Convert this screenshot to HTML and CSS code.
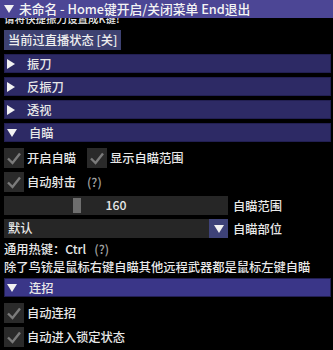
FILE: index.html
```html
<!DOCTYPE html>
<html>
<head>
<meta charset="utf-8">
<link rel="stylesheet" href="styles.css">
</head>
<body>
<div class="window">
  <div class="titlebar"><span class="tri-down"></span><span>未命名 - Home键开启/关闭菜单 End退出</span></div>
  <div class="body">
    <div class="content">
      <div class="text first">请将快捷振刀设置成K键!</div>
      <div class="row btn-row"><div class="button">当前过直播状态 [关]</div></div>
      <div class="header"><span class="tri-right"></span><span>振刀</span></div>
      <div class="header"><span class="tri-right"></span><span>反振刀</span></div>
      <div class="header"><span class="tri-right"></span><span>透视</span></div>
      <div class="header"><span class="tri-down"></span><span>自瞄</span></div>
      <div class="row check-row first-check">
        <label class="check"><span class="box"><svg viewBox="0 0 20 20"><polyline points="4,10.5 8.5,15 16,5.5"/></svg></span><span>开启自瞄</span></label>
        <label class="check"><span class="box"><svg viewBox="0 0 20 20"><polyline points="4,10.5 8.5,15 16,5.5"/></svg></span><span>显示自瞄范围</span></label>
      </div>
      <div class="row check-row">
        <label class="check"><span class="box"><svg viewBox="0 0 20 20"><polyline points="4,10.5 8.5,15 16,5.5"/></svg></span><span>自动射击</span></label>
        <span class="help">(?)</span>
      </div>
      <div class="row">
        <div class="slider"><span class="grab" style="left: 69px"></span><span class="value">160</span></div>
        <span class="label">自瞄范围</span>
      </div>
      <div class="row">
        <div class="combo"><span class="combo-text">默认</span><span class="combo-btn"><span class="tri-down"></span></span></div>
        <span class="label">自瞄部位</span>
      </div>
      <div class="text">通用热键：Ctrl<span class="help hotkey-help">(?)</span></div>
      <div class="text">除了鸟铳是鼠标右键自瞄其他远程武器都是鼠标左键自瞄</div>
      <div class="header active"><span class="tri-down"></span><span>连招</span></div>
      <div class="row check-row first-check">
        <label class="check"><span class="box"><svg viewBox="0 0 20 20"><polyline points="4,10.5 8.5,15 16,5.5"/></svg></span><span>自动连招</span></label>
      </div>
      <div class="row check-row">
        <label class="check"><span class="box"><svg viewBox="0 0 20 20"><polyline points="4,10.5 8.5,15 16,5.5"/></svg></span><span>自动进入锁定状态</span></label>
      </div>
    </div>
  </div>
</div>
</body>
</html>
```
FILE: styles.css
```css
html, body {
  margin: 0;
  padding: 0;
  background: #000;
}
body {
  width: 333px;
  height: 350px;
  overflow: hidden;
  font-family: "Noto Sans CJK SC", "Noto Sans", sans-serif;
  font-size: 12.25px;
  font-weight: 500;
  color: #e8e8e8;
}
.window {
  width: 333px;
  height: 350px;
  display: flex;
  flex-direction: column;
  background: #000;
}
.titlebar {
  height: 18px;
  flex: none;
  background: #4c4695;
  display: flex;
  align-items: center;
  gap: 5px;
  padding-left: 4px;
  line-height: 18px;
  font-size: 12.75px;
  color: #f4f4f4;
}
.body {
  flex: 1;
  overflow: hidden;
}
.content {
  display: flex;
  flex-direction: column;
  gap: 4px;
  padding-left: 4px;
  padding-right: 2px;
  margin-top: -6px;
}
.text {
  height: 14px;
  line-height: 14px;
  white-space: nowrap;
}
.text.first {
  font-size: 10.5px;
}
.row {
  display: flex;
  align-items: center;
  height: 19px;
}
.btn-row {
  height: 20px;
}
.button {
  height: 20px;
  line-height: 20px;
  padding: 0 4px;
  background: #3d4171;
  color: #eee;
}
.header {
  height: 19px;
  background: #2d2a65;
  box-shadow: inset 0 0 0 1px #221f52;
  display: flex;
  align-items: center;
  gap: 12px;
  padding-left: 3px;
}
.header.active {
  background: #3a3688;
}
.tri-right {
  width: 0;
  height: 0;
  border-top: 5px solid transparent;
  border-bottom: 5px solid transparent;
  border-left: 8px solid #f2f2f2;
}
.tri-down {
  width: 0;
  height: 0;
  border-left: 5px solid transparent;
  border-right: 5px solid transparent;
  border-top: 8px solid #f2f2f2;
}
.check-row {
  height: 20px;
}
.first-check {
  margin-top: 2px;
}
.check {
  display: flex;
  align-items: center;
  gap: 3px;
}
.check + .check {
  margin-left: 11px;
}
.box {
  width: 20px;
  height: 20px;
  background: #2a2a2a;
  display: block;
}
.box svg {
  display: block;
  width: 20px;
  height: 20px;
}
.box polyline {
  fill: none;
  stroke: #7b7b7b;
  stroke-width: 2.4;
}
.help {
  color: #a0a0a0;
  margin-left: 11px;
}
.help.hotkey-help {
  margin-left: 8px;
}
.slider, .combo {
  width: 224px;
  height: 19px;
  background: #262626;
  position: relative;
  flex: none;
}
.grab {
  position: absolute;
  top: 2px;
  width: 8px;
  height: 15px;
  background: #6e6e6e;
}
.value {
  display: block;
  text-align: center;
  line-height: 19px;
}
.label {
  margin-left: 5px;
}
.combo {
  display: flex;
}
.combo-text {
  flex: 1;
  padding-left: 4px;
  line-height: 19px;
}
.combo-btn {
  width: 19px;
  background: #3e4278;
  display: flex;
  align-items: center;
  justify-content: center;
}
```
